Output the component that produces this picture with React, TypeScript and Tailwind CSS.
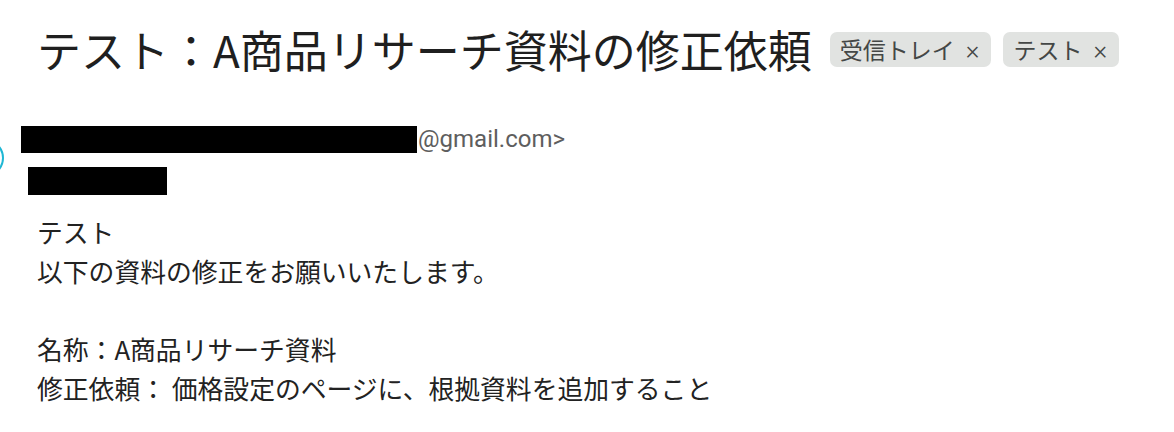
import React from "react";

const jp = { fontFamily: '"Noto Sans CJK JP", "Noto Sans", sans-serif' };

function Chip({ label }: { label: string }) {
  return (
    <span className="inline-flex h-[35px] items-center rounded-[7px] bg-[#e1e3e1] pl-[10px] pr-[12px] text-[23px] leading-none text-[#444746]">
      <span>{label}</span>
      <span className="ml-[11px] text-[26px] font-light" style={{ fontFamily: "Roboto, sans-serif" }}>
        ×
      </span>
    </span>
  );
}

export default function App() {
  return (
    <div className="relative h-[432px] w-[1174px] overflow-hidden bg-white" style={jp}>
      {/* avatar ring, mostly off-screen */}
      <div className="absolute left-[-34px] top-[139px] h-[38px] w-[38px] rounded-full border-[2px] border-[#1fb7d4]" />

      {/* subject + labels */}
      <div className="flex items-center pl-[37px] pt-[22px]">
        <h1 className="text-[44px] font-normal leading-[55px] text-[#1f1f1f]">
          テスト：A商品リサーチ資料の修正依頼
        </h1>
        <div className="ml-[18px] flex items-center gap-[12px]">
          <Chip label="受信トレイ" />
          <Chip label="テスト" />
        </div>
      </div>

      {/* sender */}
      <div className="mt-[49px] flex items-center pl-[21px]">
        <div className="h-[27px] w-[396px] bg-black" />
        <span
          className="ml-[1px] text-[24px] leading-[27px] text-[#5e5e5e]"
          style={{ fontFamily: "Roboto, sans-serif" }}
        >
          @gmail.com&gt;
        </span>
      </div>
      <div className="mt-[14px] ml-[28px] h-[28px] w-[139px] bg-black" />

      {/* body */}
      <div className="mt-[17px] pl-[37px] text-[25.8px] leading-[39px] text-[#222222]">
        <p>テスト</p>
        <p>以下の資料の修正をお願いいたします。</p>
        <p>&nbsp;</p>
        <p>名称：A商品リサーチ資料</p>
        <p>修正依頼： 価格設定のページに、根拠資料を追加すること</p>
      </div>
    </div>
  );
}
